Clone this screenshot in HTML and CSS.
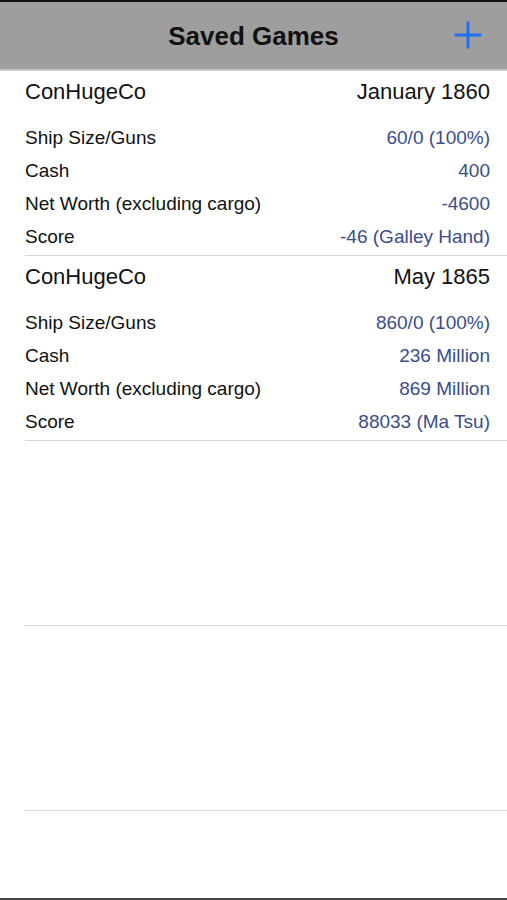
FILE: index.html
```html
<!DOCTYPE html>
<html lang="en">
<head>
    <meta charset="UTF-8">
    <meta name="viewport" content="width=device-width, initial-scale=1.0">
    <title>Saved Games</title>
    <link rel="stylesheet" href="styles.css">
</head>
<body>
    <div class="screen">
        <header class="navbar">
            <h1>Saved Games</h1>
            <button class="add-btn" aria-label="Add">
                <svg width="30" height="30" viewBox="0 0 30 30">
                    <path d="M15 1.5 V28.5 M1.5 15 H28.5" stroke="#1f6ff2" stroke-width="3" fill="none"/>
                </svg>
            </button>
        </header>

        <ul class="games">
            <li class="game">
                <div class="game-head">
                    <span>ConHugeCo</span>
                    <span>January 1860</span>
                </div>
                <div class="stat"><span>Ship Size/Guns</span><span class="val">60/0 (100%)</span></div>
                <div class="stat"><span>Cash</span><span class="val">400</span></div>
                <div class="stat"><span>Net Worth (excluding cargo)</span><span class="val">-4600</span></div>
                <div class="stat"><span>Score</span><span class="val">-46 (Galley Hand)</span></div>
            </li>
            <li class="game">
                <div class="game-head">
                    <span>ConHugeCo</span>
                    <span>May 1865</span>
                </div>
                <div class="stat"><span>Ship Size/Guns</span><span class="val">860/0 (100%)</span></div>
                <div class="stat"><span>Cash</span><span class="val">236 Million</span></div>
                <div class="stat"><span>Net Worth (excluding cargo)</span><span class="val">869 Million</span></div>
                <div class="stat"><span>Score</span><span class="val">88033 (Ma Tsu)</span></div>
            </li>
            <li class="game empty"></li>
            <li class="game empty"></li>
        </ul>

        <div class="bottom-bar"></div>
    </div>
</body>
</html>
```

FILE: styles.css
```css
/* Global Styles */
* {
    box-sizing: border-box;
    margin: 0;
    padding: 0;
}
body {
    font-family: "Liberation Sans", Arial, sans-serif;
    background: #fff;
    color: #111;
}
.screen {
    height: 900px;
    display: flex;
    flex-direction: column;
    overflow: hidden;
}
.navbar {
    height: 71px;
    background-color: #9e9e9e;
    border-top: 2px solid #111;
    border-bottom: 2px solid #c9c9c9;
    display: flex;
    align-items: center;
    justify-content: center;
    position: relative;
    flex-shrink: 0;
}
.navbar h1 {
    font-size: 26px;
    font-weight: bold;
    color: #111;
    margin-top: 1px;
}
.add-btn {
    position: absolute; /* sits over the bar on the right */
    right: 24px;
    top: 18px;
    background: none;
    border: none;
    width: 30px;
    height: 30px;
}
.games {
    list-style: none;
}
.game {
    height: 185px;
    margin-left: 25px;
    padding: 8px 17px 3px 0;
    border-bottom: 1px solid #d6d6d6;
}
.game-head {
    display: flex;
    justify-content: space-between;
    font-size: 22px;
    line-height: 26px;
    margin-bottom: 16px;
}
.stat {
    display: flex;
    justify-content: space-between;
    font-size: 19px;
    line-height: 33px;
}
.stat .val {
    color: #3a4d8c;
}
.bottom-bar {
    margin-top: auto;
    height: 2px;
    background-color: #444;
    flex-shrink: 0;
}
```
